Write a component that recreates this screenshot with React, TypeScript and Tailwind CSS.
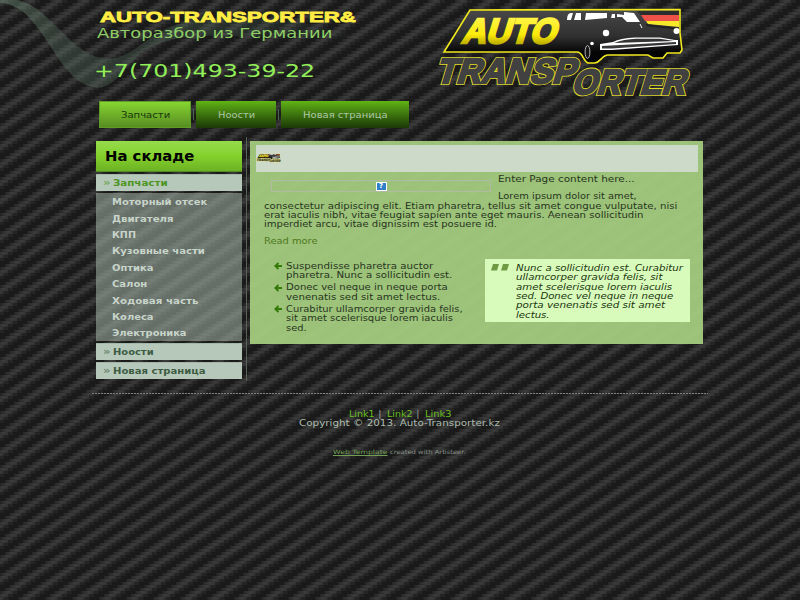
import React, { useLayoutEffect, useRef, useState } from "react";

type LineProps = { w: number; h: string; className?: string; children: React.ReactNode };

// A single line of type, stretched horizontally to a given measure.
function Line({ w, h, className = "", children }: LineProps) {
  const ref = useRef<HTMLSpanElement>(null);
  const [scale, setScale] = useState(1);
  useLayoutEffect(() => {
    if (ref.current) setScale(w / ref.current.offsetWidth);
  }, [w]);
  return (
    <div className={`flex items-center ${h} ${className}`} style={{ width: w }}>
      <span ref={ref} className="inline-block shrink-0 origin-left whitespace-nowrap" style={{ transform: `scaleX(${scale})` }}>
        {children}
      </span>
    </div>
  );
}

const rows = [0, 1, 2, 3, 4, 5];

function Backdrop() {
  return (
    <svg className="absolute inset-0 -z-10" width="800" height="600">
      <defs>
        <linearGradient id="brick" x1="0" x2="1" y1="0" y2="0">
          <stop offset="0" stopColor="#262626" />
          <stop offset="0.6" stopColor="#3c3c3c" />
          <stop offset="1" stopColor="#323232" />
        </linearGradient>
        <pattern id="carbon" width="27" height="18" patternUnits="userSpaceOnUse">
          <rect width="27" height="18" fill="#1a1a1a" />
          {rows.map((r) => (
            <g key={r}>
              {[-27, 0, 27].map((o) => (
                <g key={o}>
                  <rect x={23 - r * 4.5 + o} y={r * 3} width="17" height="3" fill="#242424" />
                  <rect x={23 - r * 4.5 + o} y={r * 3} width="12" height="3" fill="url(#brick)" />
                  <rect x={23 - r * 4.5 + o} y={r * 3 + 2} width="12" height="1" fill="#000" fillOpacity=".06" />
                </g>
              ))}
            </g>
          ))}
        </pattern>
        <linearGradient id="wave" x1="0" x2="380" y1="0" y2="0" gradientUnits="userSpaceOnUse">
          <stop offset="0" stopColor="#6b8a76" stopOpacity="0.5" />
          <stop offset="0.15" stopColor="#5a7362" stopOpacity="0.36" />
          <stop offset="0.5" stopColor="#4c6654" stopOpacity="0.34" />
          <stop offset="1" stopColor="#4c6654" stopOpacity="0" />
        </linearGradient>
      </defs>
      <rect width="800" height="600" fill="url(#carbon)" />
      <path d="M0 0H18C52 8 72 58 108 59C138 58 150 26 190 22C250 12 310 20 375 42C330 34 290 34 240 36C190 34 165 38 142 52C125 65 118 86 97 88C65 84 52 42 33 22C23 9 12 4 0 3Z" fill="url(#wave)" />
    </svg>
  );
}

function Logo({ className }: { className: string }) {
  return (
    <svg className={className} viewBox="430 0 270 105">
      <defs>
        <linearGradient id="panel" x1="0" x2="0" y1="0" y2="1">
          <stop offset="0" stopColor="#484848" />
          <stop offset="0.5" stopColor="#303030" />
          <stop offset="0.8" stopColor="#050505" />
        </linearGradient>
        <linearGradient id="gold" x1="0" x2="0" y1="-28" y2="2" gradientUnits="userSpaceOnUse">
          <stop offset="0" stopColor="#fff650" />
          <stop offset="0.65" stopColor="#fbea0a" />
          <stop offset="1" stopColor="#b5a700" />
        </linearGradient>
      </defs>
      <path d="M470 10L680 9.5V33L682 50L680 53H667L663 58H653L648 55H608C602 55 601 62 595 63H588C583 61 583 52 577 52L444 52Z" fill="url(#panel)" stroke="#f1e91d" strokeWidth="1.6" />
      <path d="M637 11H679V15H641Z" fill="#2d2d2d" />
      <path d="M641 15H679V21H645Z" fill="#ee5148" />
      <path d="M646 21H679V27L648 24Z" fill="#f8e82c" />
      <g fill="#fff">
        <path d="M571 13Q567 13 567 20H571L573 13ZM576 13L574 20H581V13ZM586 13H607V18L585 20ZM612 14H615V18H611ZM617 14L624 15V12L634 13L640 22H627L622 17H617Z" />
        <circle cx="606" cy="33" r="3.2" />
        <circle cx="592" cy="43.5" r="1.8" />
        <path d="M600 44L613 42Q620 38 635 37.5H660L675 40H678V45L612 50H600Z" />
      </g>
      <path d="M614 43Q624 39 636 38.7H660L674 41Z" fill="#343434" />
      <path d="M602 46L676 42V44L612 48.5H602Z" fill="#383838" />
      <path d="M646 25C658 27 668 27 679 29" fill="none" stroke="#222" strokeWidth="2" />
      <circle cx="676.5" cy="31" r="3" fill="#fff" />
      <path d="M640 24L642 28" stroke="#fff" />
      <ellipse cx="587.5" cy="52" rx="2.4" ry="6.5" fill="#151515" stroke="#d8d8d8" strokeWidth=".8" />
      <g fontFamily="'Liberation Sans', Arial, sans-serif" fontWeight="700" fontSize="35" strokeLinejoin="miter" strokeMiterlimit="3">
        <text transform="translate(461 43) skewX(-17)" textLength="94" lengthAdjust="spacingAndGlyphs" fill="url(#gold)" stroke="url(#gold)" strokeWidth="2.6">AUTO</text>
        <g fill="#e5df28" stroke="#e5df28" strokeWidth="4">
          <text transform="translate(435 82.5) skewX(-17)" textLength="139" lengthAdjust="spacingAndGlyphs">TRANSP</text>
          <text transform="translate(571 94) skewX(-17)" textLength="113" lengthAdjust="spacingAndGlyphs">ORTER</text>
        </g>
        <g fill="#414141" stroke="#414141" strokeWidth="2.3">
          <text transform="translate(435 82.5) skewX(-17)" textLength="139" lengthAdjust="spacingAndGlyphs">TRANSP</text>
          <text transform="translate(571 94) skewX(-17)" textLength="113" lengthAdjust="spacingAndGlyphs">ORTER</text>
        </g>
      </g>
    </svg>
  );
}

const parts: [string, number][] = [
  ["Моторный отсек", 95], ["Двигателя", 61], ["КПП", 24], ["Кузовные части", 93], ["Оптика", 41],
  ["Салон", 35], ["Ходовая часть", 86], ["Колеса", 41], ["Электроника", 74],
];

function MenuRow({ text, w, tone }: { text: string; w: number; tone: string }) {
  return (
    <div className={`flex h-[17px] items-center border-t border-[#a4b6a7] bg-[#b5c8b9] pl-[7px] font-bold ${tone}`}>
      <Line w={7} h="h-4" className="text-[10px] opacity-60">»</Line>
      <Line w={w} h="h-4" className="ml-[3px] pt-px text-[8px]">{text}</Line>
    </div>
  );
}

const bullets: [string, number][][] = [
  [["Suspendisse pharetra auctor", 147], ["pharetra. Nunc a sollicitudin est.", 166]],
  [["Donec vel neque in neque porta", 162], ["venenatis sed sit amet lectus.", 154]],
  [["Curabitur ullamcorper gravida felis,", 176], ["sit amet scelerisque lorem iaculis", 167], ["sed.", 21]],
];

const quote: [string, number][] = [
  ["Nunc a sollicitudin est. Curabitur", 167], ["ullamcorper gravida felis, sit", 146], ["amet scelerisque lorem iaculis", 156],
  ["sed. Donec vel neque in neque", 157], ["porta venenatis sed sit amet", 149], ["lectus.", 33],
];

function Content() {
  return (
    <main className="ml-[3px] mt-1 h-[203px] w-[453px] bg-[#a7cf80]/92 px-[6px] pt-1 text-[8px] text-[#27351f]">
      <div className="flex h-[27px] w-[442px] items-center bg-[#d3ddd2]/90">
        <Logo className="-mt-[2px] h-[10px] w-[26px]" />
      </div>
      <div className="flex pl-[15px]">
        <div className="mt-[8px] flex h-[12px] w-[220px] items-center justify-center border border-[#b1bba4]">
          <div className="flex h-[9px] w-[11px] items-center justify-center border border-white bg-[#2f80c8] text-[7px] font-bold text-white">?</div>
        </div>
        <div className="ml-[7px] pt-[3px]">
          <Line w={137} h="h-[10px]">Enter Page content here...</Line>
          <Line w={139} h="h-[10px]" className="mt-[7px]">Lorem ipsum dolor sit amet,</Line>
        </div>
      </div>
      <div className="pl-2">
        <Line w={413} h="h-[9.4px]">consectetur adipiscing elit. Etiam pharetra, tellus sit amet congue vulputate, nisi</Line>
        <Line w={380} h="h-[9.4px]">erat iaculis nibh, vitae feugiat sapien ante eget mauris. Aenean sollicitudin</Line>
        <Line w={233} h="h-[9.4px]">imperdiet arcu, vitae dignissim est posuere id.</Line>
        <Line w={53} h="h-[10px]" className="mt-[7px] text-[#4d7a20]">Read more</Line>
      </div>
      <div className="mt-[12px] flex">
        <ul className="w-[229px] pl-[18px] pt-[3px]">
          {bullets.map((b, i) => (
            <li key={i} className="mb-[2.8px] flex">
              <svg className="mr-1 h-2 w-2" viewBox="0 0 8 8"><path d="M8 4H1.5M4.5 1L1.3 4L4.5 7" fill="none" stroke="#347a08" strokeWidth="1.9" /></svg>
              <div>{b.map(([t, w]) => <Line key={t} w={w} h="h-[9.4px]">{t}</Line>)}</div>
            </li>
          ))}
        </ul>
        <blockquote className="flex h-[63px] w-[205px] bg-[#d8fabb] pl-[6px] pt-[5px] italic text-[#20350f]">
          <svg className="mr-[7px] h-[7px] w-[18px]" viewBox="0 0 18 7"><path d="M2 0H8L6 6.5H0ZM12 0H18L16 6.5H10Z" fill="#6e9a43" /></svg>
          <div>{quote.map(([t, w]) => <Line key={t} w={w} h="h-[9.35px]">{t}</Line>)}</div>
        </blockquote>
      </div>
    </main>
  );
}

function Separator() {
  return <div className="mx-[2px] h-[11px] w-px bg-[#48664a]" />;
}

export default function App() {
  return (
    <div className="relative isolate h-[600px] w-[800px] overflow-hidden bg-[#202020] font-['DejaVu_Sans',Verdana,sans-serif] leading-none">
      <Backdrop />
      <header className="flex h-[101px]">
        <div className="w-[437px] pl-[94px] pt-[8px]">
          <Line w={256} h="h-[17px]" className="ml-[6px] font-['Liberation_Sans',Arial,sans-serif] text-[15.5px] font-bold text-[#ffed43] [-webkit-text-stroke:0.8px_#ffed43]">AUTO-TRANSPORTER&amp;</Line>
          <Line w={236} h="h-[17px]" className="-mt-px ml-[3px] text-[14px] text-[#8fce65]">Авторазбор из Германии</Line>
          <Line w={221} h="h-5" className="mt-5 text-[18px] text-[#92ef58]">+7(701)493-39-22</Line>
        </div>
        <Logo className="-ml-[7px] h-[105px] w-[270px] shrink-0" />
      </header>
      <nav className="ml-[99px] flex items-center text-[8px]">
        <div className="flex h-[27px] w-[92px] items-center justify-center border border-[#5f9c26] bg-linear-to-b from-[#87d531] to-[#578d22] text-[#16350a]"><Line w={49} h="h-4" className="pt-[2px]">Запчасти</Line></div>
        <Separator />
        <div className="flex h-[27px] w-[80px] items-center justify-center bg-linear-to-b from-[#61b416] to-[#1c3906] text-[#adc7a7]"><Line w={37} h="h-4" className="pt-[2px]">Ноости</Line></div>
        <Separator />
        <div className="flex h-[27px] w-[128px] items-center justify-center bg-linear-to-b from-[#61b416] to-[#1c3906] text-[#adc7a7]"><Line w={85} h="h-4" className="pt-[2px]">Новая страница</Line></div>
      </nav>
      <div className="ml-[96px] mt-[9px] flex h-[244px]">
        <aside className="w-[146px] pt-1">
          <div className="flex h-[31px] items-center border-b border-[#548921] bg-linear-to-b from-[#96dc4b] via-[#83d12c] to-[#6db224] pl-[9px] font-bold text-black">
            <Line w={89} h="h-6" className="pt-[2px] text-[13.5px]">На складе</Line>
          </div>
          <div className="h-[2px]" />
          <MenuRow text="Запчасти" w={54} tone="text-[#4b941f]" />
          <div className="mt-[2px] h-[148px] bg-[#a4b5a8]/55 pl-[16px] pt-[2px] text-[8px] font-bold text-[#c8d5ca]">
            {parts.map(([t, w]) => <Line key={t} w={w} h="h-[16.4px]">{t}</Line>)}
          </div>
          <div className="mt-[2px] space-y-[2px]">
            <MenuRow text="Ноости" w={41} tone="text-[#3d5b43]" />
            <MenuRow text="Новая страница" w={93} tone="text-[#3d5b43]" />
          </div>
        </aside>
        <div className="ml-1 w-px bg-[#59645b]" />
        <Content />
      </div>
      <footer className="mx-auto mt-[12px] w-[616px] text-[8px] text-[#adbbae]">
        <div className="h-px bg-[repeating-linear-gradient(90deg,#7a827b_0_2px,#2a2a2a_2px_3px)]" />
        <div className="flex flex-col items-center pr-px pt-4">
          <div className="flex gap-[5px]">
            <Line w={25} h="h-[9.4px]" className="text-[#68bd1f]">Link1</Line>
            <Line w={3} h="h-[9.4px]">|</Line>
            <Line w={25} h="h-[9.4px]" className="text-[#68bd1f]">Link2</Line>
            <Line w={3} h="h-[9.4px]">|</Line>
            <Line w={26} h="h-[9.4px]" className="text-[#68bd1f]">Link3</Line>
          </div>
          <Line w={201} h="h-[9.4px]">Copyright © 2013. Auto-Transporter.kz</Line>
          <div className="mt-[19px] flex gap-[3px] text-[6px] text-[#879188]">
            <Line w={54} h="h-[8px]" className="text-[#6f9d53] underline">Web Template</Line>
            <Line w={76} h="h-[8px]">created with Artisteer.</Line>
          </div>
        </div>
      </footer>
    </div>
  );
}
